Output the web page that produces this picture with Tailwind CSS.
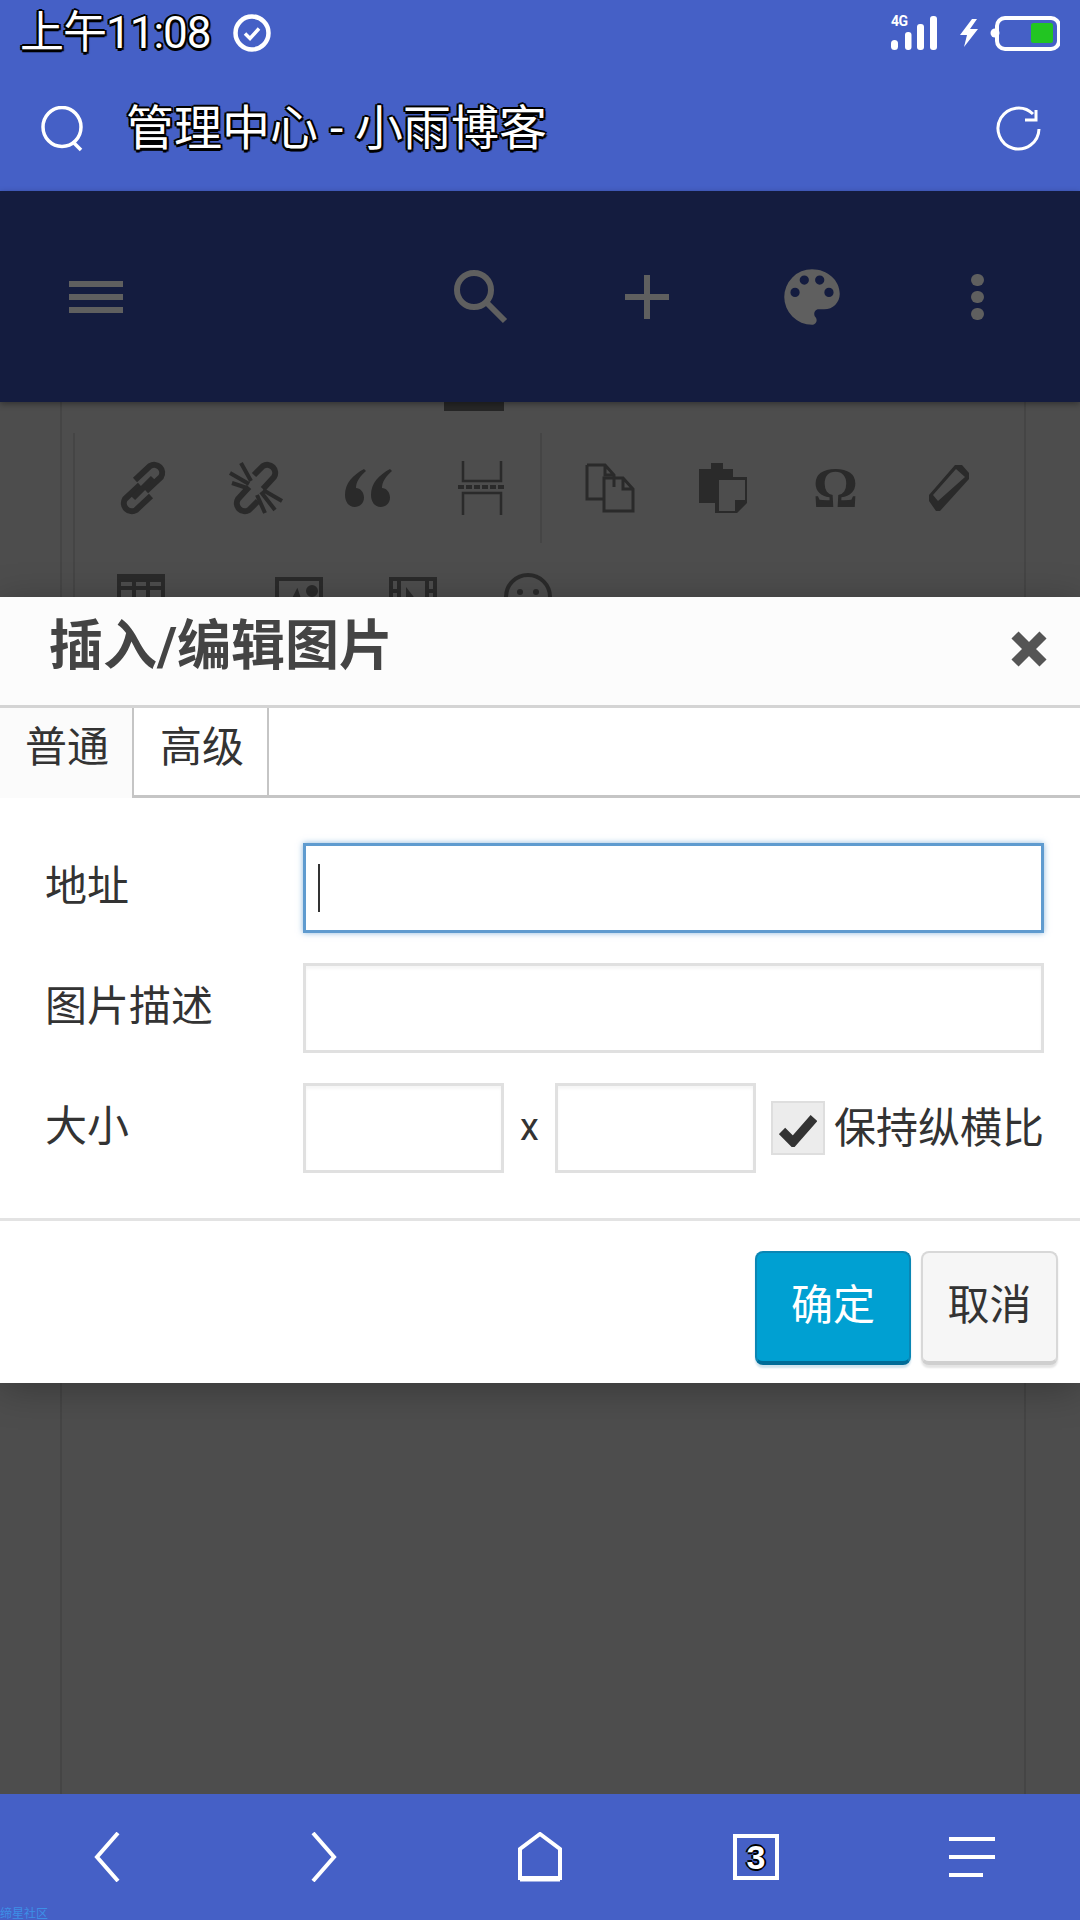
<!DOCTYPE html>
<html lang="zh"><head><meta charset="utf-8"><script src="https://cdn.jsdelivr.net/npm/@tailwindcss/browser@4"></script></head>
<body class="m-0 bg-[#4d4d4d]">
<div class="relative w-[1080px] h-[1920px] overflow-hidden flex flex-col font-['Roboto','Noto_Sans_CJK_SC',sans-serif] text-[#333]">
  <!-- browser top -->
  <header class="h-[191px] shrink-0 bg-[#4560c6] text-white flex flex-col">
    <div class="h-[66px] flex items-center pl-[20px] pr-[20px]">
      <span class="text-[44px] leading-none tracking-[-1px] [text-shadow:-2px_-1px_0_#000,2px_-1px_0_#000,-2px_1px_0_#000,2px_2px_1px_#000,0_-2px_0_#000,0_3px_0_#000]">上午11:08</span>
      <svg class="ml-[21px]" width="40" height="40" viewBox="0 0 40 40" fill="none" stroke="#fff"><circle cx="20" cy="20" r="16.5" stroke-width="4.5"/><path d="M13 20.500l5 5 9-10" stroke-width="3.500"/></svg>
      <svg class="ml-auto" width="170" height="66" viewBox="890 0 170 66" fill="#fff">
        <text x="891" y="26" font-size="14" font-weight="700" font-family="Roboto" letter-spacing="-0.5">4G</text>
        <rect x="891" y="40" width="7" height="10" rx="3.5"/><rect x="905" y="32" width="6.5" height="18" rx="3"/><rect x="917" y="24" width="7" height="26" rx="3"/><rect x="930" y="16" width="7" height="34" rx="3"/>
        <path d="M972 19l-12 16h7l-3 12 14-18h-8l7-10z"/>
        <rect x="997" y="18" width="62" height="31" rx="8" fill="none" stroke="#fff" stroke-width="4"/>
        <circle cx="995" cy="33" r="4.5"/>
        <rect x="1031" y="23" width="22" height="20" rx="2.5" fill="#22c522"/>
      </svg>
    </div>
    <div class="flex-1 flex items-center pl-[40px] pr-[38px]">
      <svg width="46" height="46" viewBox="0 0 46 46" fill="none" stroke="#fff" stroke-width="3.5"><ellipse cx="22" cy="21" rx="19" ry="19.5"/><path d="M33 36l8 8"/></svg>
      <span class="ml-[40px] text-[48px] leading-none [text-shadow:-2px_-1px_0_#000,2px_-1px_0_#000,-2px_1px_0_#000,2px_2px_1px_#000,0_-2px_0_#000,0_3px_0_#000]">管理中心 - 小雨博客</span>
      <svg class="ml-auto" width="46" height="46" viewBox="0 0 46 46" fill="none" stroke="#fff" stroke-width="3"><path d="M37 8A20.500 20.500 0 1 0 43 23"/><path d="M29 14h11V4"/></svg>
    </div>
  </header>

  <!-- dimmed admin bar -->
  <nav class="relative z-10 h-[211px] shrink-0 bg-[#141c3f] shadow-[0_2px_6px_rgba(0,0,0,.35)]">
    <div class="h-full flex items-center pl-[69px]">
      <div class="w-[54px] flex flex-col gap-[7px]"><i class="h-[6px] bg-[#5f5f5f]"></i><i class="h-[6px] bg-[#5f5f5f]"></i><i class="h-[6px] bg-[#5f5f5f]"></i></div>
      <svg class="ml-[331px]" width="54" height="54" viewBox="0 0 54 54" fill="none" stroke="#5f5f5f"><circle cx="20" cy="20" r="17" stroke-width="6"/><path d="M33 33l18 18" stroke-width="6"/></svg>
      <svg class="ml-[117px]" width="44" height="44" viewBox="0 0 44 44" fill="#5f5f5f"><rect y="19" width="44" height="6"/><rect x="19" width="6" height="44"/></svg>
      <svg class="ml-[106px]" width="74" height="74" viewBox="0 0 24 24" fill="#5f5f5f"><path d="M12 3a9 9 0 0 0 0 18c.83 0 1.500-.67 1.500-1.500 0-.39-.15-.74-.39-1.010-.23-.26-.38-.61-.38-.99 0-.83.670-1.500 1.500-1.500H16c2.760 0 5-2.240 5-5 0-4.420-4.030-8-9-8zm-5.500 9a1.500 1.500 0 1 1 0-3 1.500 1.500 0 0 1 0 3zm3-4a1.500 1.500 0 1 1 0-3 1.500 1.500 0 0 1 0 3zm5 0a1.500 1.500 0 1 1 0-3 1.500 1.500 0 0 1 0 3zm3 4a1.500 1.500 0 1 1 0-3 1.500 1.500 0 0 1 0 3z"/></svg>
      <div class="ml-[122px] w-[13px] flex flex-col gap-[5px]"><i class="h-[12px] rounded-full bg-[#5f5f5f]"></i><i class="h-[12px] rounded-full bg-[#5f5f5f]"></i><i class="h-[12px] rounded-full bg-[#5f5f5f]"></i></div>
    </div>
  </nav>

  <!-- dimmed editor -->
  <main class="relative flex-1 bg-[#4d4d4d] overflow-hidden">
    <div class="absolute left-[444px] top-0 w-[60px] h-[9px] bg-[#262626]"></div>
    <div class="ml-[60px] mr-[54px] h-full border-x-2 border-[#454545] pt-[31px] pl-[11px]">
      <div class="border-l-2 border-[#454545] w-max">
        <div class="flex items-center h-[110px]">
          <div class="w-[467px] flex items-center pl-[11px] border-r-2 border-[#454545] h-full">
            <div class="w-[113px] flex justify-center"><svg width="54" height="54" viewBox="0 0 54 54" fill="none" stroke="#2a2a2a" stroke-width="6"><path d="M24 24L9 38a8 8 0 0 0 11 11l15-14"/><path d="M17 37l20-20"/><path d="M30 30l15-14A8 8 0 0 0 34 5L19 19"/></svg></div>
            <div class="w-[113px] flex justify-center"><svg width="54" height="54" viewBox="0 0 54 54" fill="none" stroke="#2a2a2a" stroke-width="6"><path d="M20 26L9 38a8 8 0 0 0 11 11l9-9"/><path d="M34 28l11-12A8 8 0 0 0 34 5l-9 9"/><path d="M1 12l19 11M3 22l15 5M12 2l10 18M36 52l-8-18M46 49L32 31M53 40l-19-11" stroke-width="4"/></svg></div>
            <div class="w-[113px] flex justify-center"><svg width="48" height="38" viewBox="0 0 48 38" fill="#2a2a2a"><path d="M19 0C8 6 0 14 0 26c0 7 4 12 9.500 12s9.500-4 9.500-9.500-4-9.500-8-9.500c0-6 4-12 10-17zM45 0C34 6 26 14 26 26c0 7 4 12 9.500 12s9.500-4 9.500-9.500-4-9.500-8-9.500c0-6 4-12 10-17z"/></svg></div>
            <div class="w-[113px] flex justify-center"><svg width="52" height="54" viewBox="0 0 52 54" fill="none" stroke="#2a2a2a" stroke-width="2.500"><path d="M7 0v20h38V0M7 54V32h38v22" /><path d="M2 26h48" stroke-width="4" stroke-dasharray="6 2"/></svg></div>
          </div>
          <div class="flex items-center pl-[11px] h-full">
            <div class="w-[113px] flex justify-center"><svg width="50" height="50" viewBox="0 0 50 50" fill="none" stroke="#2a2a2a" stroke-width="3"><path d="M2 2h18l9 10v12M2 2v34h16M20 2v10h9"/><path d="M19 15h19l10 11v22H19zM38 15v11h10"/></svg></div>
            <div class="w-[113px] flex justify-center"><svg width="48" height="50" viewBox="0 0 48 50" fill="#2a2a2a"><path d="M0 6h12V0h12v6h10v12H18v22H0z"/><path d="M18 16h30v22l-11 12H18z" fill="#4d4d4d"/><path d="M20 17h26v20H36v11H20zM16 14v36h22l12-12V14z" fill-rule="evenodd"/></svg></div>
            <div class="w-[113px] flex justify-center"><span class="text-[56px] font-bold leading-none font-['Liberation_Serif',serif] text-[#2a2a2a]">Ω</span></div>
            <div class="w-[113px] flex justify-center"><svg width="40" height="46" viewBox="0 0 40 46" fill="#2a2a2a"><path d="M26 0L0 30v6l7 10h4L40 14V8L33 0zM27 4l9 8L9 36l-5-6z" fill-rule="evenodd"/></svg></div>
          </div>
        </div>
        <div class="flex items-start pl-[42px] pt-[31px] gap-[66px]">
          <div class="flex items-center gap-[20px]">
            <svg width="48" height="48" viewBox="0 0 48 48" fill="none" stroke="#2a2a2a" stroke-width="4"><path d="M2 2h44v44H2zM2 14h44M2 26h44M2 36h44M17 2v44M31 2v44"/><rect width="48" height="8" fill="#2a2a2a" stroke="none"/></svg>
            <svg class="mt-[24px]" width="24" height="14" viewBox="0 0 24 14" fill="#2a2a2a"><path d="M0 0h24L12 14z"/></svg>
          </div>
          <svg class="mt-[3px]" width="48" height="48" viewBox="0 0 48 48" fill="none" stroke="#2a2a2a" stroke-width="4"><rect x="2" y="2" width="44" height="44"/><circle cx="37" cy="14" r="4" fill="#2a2a2a"/><path d="M10 40l12-24 8 24z" fill="#2a2a2a"/></svg>
          <svg class="mt-[3px]" width="48" height="48" viewBox="0 0 48 48" fill="none" stroke="#2a2a2a" stroke-width="4"><rect x="2" y="2" width="44" height="44"/><path d="M10 2v44M38 2v44M2 14h8M2 26h8M38 14h8M38 26h8"/><path d="M17 10l14 18H17z" fill="#2a2a2a" stroke="none"/></svg>
          <svg class="mt-[-2px]" width="50" height="50" viewBox="0 0 50 50" fill="none" stroke="#2a2a2a" stroke-width="4"><circle cx="25" cy="25" r="22"/><circle cx="17" cy="20" r="3" fill="#2a2a2a" stroke="none"/><circle cx="33" cy="20" r="3" fill="#2a2a2a" stroke="none"/></svg>
        </div>
      </div>
    </div>

    <!-- dialog -->
    <section class="absolute z-20 left-0 top-[195px] w-full h-[786px] bg-white shadow-[0_6px_36px_rgba(0,0,0,.28)] flex flex-col">
      <div class="h-[108px] shrink-0 flex items-center justify-between bg-[#fcfcfc] pl-[49px] pr-[33px] border-b-[3px] border-[#d4d4d4] box-content">
        <h1 class="text-[54px] font-bold leading-none text-[#444] pb-[8px]">插入/编辑图片</h1>
        <svg class="mb-[4px]" width="36" height="36" viewBox="0 0 36 36" fill="none" stroke="#555" stroke-width="10"><path d="M4 4l28 28M32 4L4 32"/></svg>
      </div>
      <div class="h-[90px] shrink-0 flex text-[42px]">
        <div class="w-[134px] bg-[#fbfbfb] border-r-2 border-[#c5c5c5] pl-[25px] pt-[9px] leading-[62px]">普通</div>
        <div class="w-[135px] border-r-2 border-b-[3px] border-[#c5c5c5] pl-[26px] pt-[9px] leading-[62px]">高级</div>
        <div class="flex-1 border-b-[3px] border-[#c5c5c5]"></div>
      </div>
      <div class="h-[423px] shrink-0 pt-[45px] pl-[45px] pr-[36px] flex flex-col gap-[30px] border-b-[3px] border-[#e3e3e3] text-[42px]">
        <div class="flex items-center h-[90px]">
          <label class="w-[258px] pb-[4px]">地址</label>
          <div class="flex-1 h-full flex items-center border-[3px] border-[#5f9bcf] shadow-[0_0_6px_rgba(95,155,207,.7)] pl-[12px]"><i class="w-[2px] h-[48px] bg-[#333]"></i></div>
        </div>
        <div class="flex items-center h-[90px]">
          <label class="w-[258px] pb-[4px]">图片描述</label>
          <div class="flex-1 h-full border-[3px] border-[#e0e0e0] shadow-[inset_0_3px_3px_#f6f6f6]"></div>
        </div>
        <div class="flex items-center h-[90px]">
          <label class="w-[258px] pb-[4px]">大小</label>
          <div class="w-[201px] h-full border-[3px] border-[#e0e0e0] shadow-[inset_0_3px_3px_#f6f6f6]"></div>
          <span class="w-[51px] text-center text-[38px] leading-none pb-[3px]">x</span>
          <div class="w-[201px] h-full border-[3px] border-[#e0e0e0] shadow-[inset_0_3px_3px_#f6f6f6]"></div>
          <div class="ml-[15px] w-[54px] h-[54px] bg-[#ececec] border-2 border-[#dedede] flex items-center justify-center">
            <svg class="mt-[4px]" width="38" height="34" viewBox="0 0 38 34" fill="none" stroke="#333" stroke-width="9"><path d="M3 18l11 11L35 5"/></svg>
          </div>
          <span class="ml-[9px] whitespace-nowrap">保持纵横比</span>
        </div>
      </div>
      <div class="flex-1 flex justify-end items-start pt-[30px] pr-[22px] gap-[10px] text-[42px]">
        <button class="w-[156px] h-[114px] pb-[3px] rounded-[8px] bg-[#00a0d2] border-2 border-[#0a86b4] border-b-[4px] border-b-[#006c98] text-white shadow-[0_3px_2px_#cfe3ee]">确定</button>
        <button class="w-[137px] h-[114px] pb-[3px] rounded-[8px] bg-[#f6f6f6] border-2 border-[#d8d8d8] border-b-[4px] border-b-[#cfcfcf] shadow-[0_3px_2px_#e4e4e4]">取消</button>
      </div>
    </section>
  </main>

  <!-- browser bottom -->
  <footer class="relative h-[126px] shrink-0 bg-[#4560c6] flex items-center pb-[1px]">
    <div class="flex-1 relative h-full">
      <svg class="absolute left-[93px] top-[38px]" width="28" height="50" viewBox="0 0 28 50" fill="none" stroke="#fff" stroke-width="4"><path d="M25 1L4 25l21 24" /></svg>
      <svg class="absolute left-[310px] top-[38px]" width="28" height="50" viewBox="0 0 28 50" fill="none" stroke="#fff" stroke-width="4"><path d="M3 1l21 24L3 49" /></svg>
      <svg class="absolute left-[518px] top-[38px]" width="44" height="50" viewBox="0 0 44 50" fill="none" stroke="#fff" stroke-width="4"><path d="M2 46V17L22 2l20 15v29z"/><path d="M2 47h40" stroke-width="5"/></svg>
      <div class="absolute left-[733px] top-[40px] w-[46px] h-[46px] border-[4px] border-white flex items-center justify-center text-white text-[34px] font-bold leading-none font-['Liberation_Sans',sans-serif] [text-shadow:-2px_0_0_#000,2px_0_0_#000,0_-2px_0_#000,0_2px_0_#000]">3</div>
      <div class="absolute left-[949px] top-[43px] w-[46px] flex flex-col gap-[14px]"><i class="h-[4px] bg-white"></i><i class="h-[4px] bg-white"></i><i class="h-[4px] w-[34px] bg-white"></i></div>
    </div>
    <span class="absolute left-0 bottom-0 text-[12px] leading-none text-[#3d8fe6]">缔星社区</span>
  </footer>
</div>
</body></html>
